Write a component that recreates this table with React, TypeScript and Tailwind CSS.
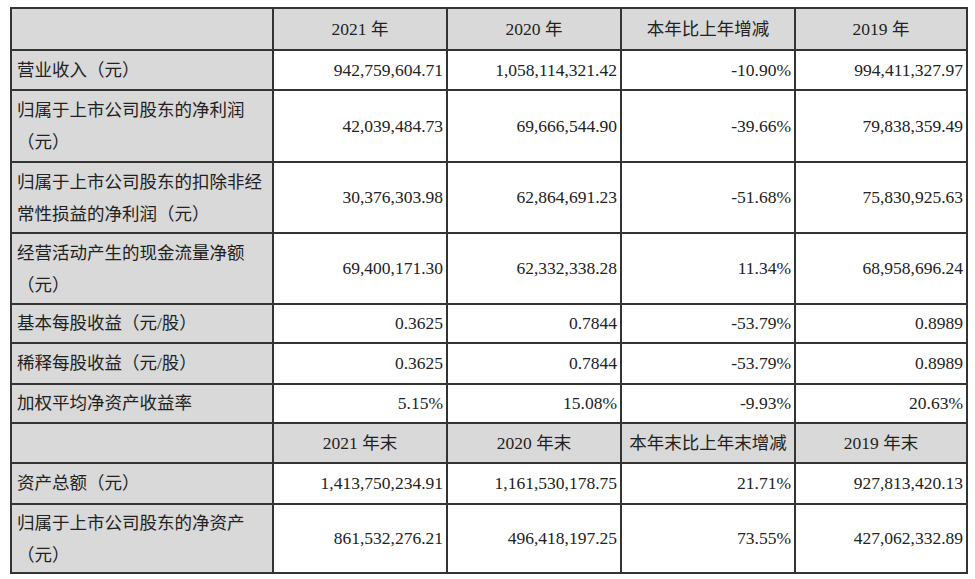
type Row = {
  label: string[];
  values: string[];
  h: string;
};

const HEAD_1 = ['2021 年', '2020 年', '本年比上年增减', '2019 年'];
const HEAD_2 = ['2021 年末', '2020 年末', '本年末比上年末增减', '2019 年末'];

const ROWS_1: Row[] = [
  { label: ['营业收入（元）'], values: ['942,759,604.71', '1,058,114,321.42', '-10.90%', '994,411,327.97'], h: 'h-[40px]' },
  { label: ['归属于上市公司股东的净利润', '（元）'], values: ['42,039,484.73', '69,666,544.90', '-39.66%', '79,838,359.49'], h: 'h-[72px]' },
  { label: ['归属于上市公司股东的扣除非经', '常性损益的净利润（元）'], values: ['30,376,303.98', '62,864,691.23', '-51.68%', '75,830,925.63'], h: 'h-[71px]' },
  { label: ['经营活动产生的现金流量净额', '（元）'], values: ['69,400,171.30', '62,332,338.28', '11.34%', '68,958,696.24'], h: 'h-[71px]' },
  { label: ['基本每股收益（元/股）'], values: ['0.3625', '0.7844', '-53.79%', '0.8989'], h: 'h-[39px]' },
  { label: ['稀释每股收益（元/股）'], values: ['0.3625', '0.7844', '-53.79%', '0.8989'], h: 'h-[41px]' },
  { label: ['加权平均净资产收益率'], values: ['5.15%', '15.08%', '-9.93%', '20.63%'], h: 'h-[39px]' },
];

const ROWS_2: Row[] = [
  { label: ['资产总额（元）'], values: ['1,413,750,234.91', '1,161,530,178.75', '21.71%', '927,813,420.13'], h: 'h-[41px]' },
  { label: ['归属于上市公司股东的净资产', '（元）'], values: ['861,532,276.21', '496,418,197.25', '73.55%', '427,062,332.89'], h: 'h-[69px]' },
];

const cell = 'border-2 border-[#333]';

function HeadRow({ cols, h }: { cols: string[]; h: string }) {
  return (
    <tr className={`${h} bg-[#d9d9d9]`}>
      <td className={cell}></td>
      {cols.map((c) => (
        <td key={c} className={`${cell} text-center`}>
          {c}
        </td>
      ))}
    </tr>
  );
}

function DataRow({ row }: { row: Row }) {
  const tall = row.label.length > 1;
  return (
    <tr className={row.h}>
      <td className={`${cell} bg-[#d9d9d9] pl-[5px] align-middle`}>
        {row.label.map((l, i) => (
          <div key={i} className={tall ? 'leading-[32px]' : ''}>
            {l}
          </div>
        ))}
      </td>
      {row.values.map((v, i) => (
        <td key={i} className={`${cell} bg-white pr-[3px] text-right`}>
          {v}
        </td>
      ))}
    </tr>
  );
}

export default function App() {
  return (
    <div className="min-h-[579px] w-[975px] bg-white pt-[7px] pl-[10px]">
      <table
        className="w-[956px] table-fixed border-collapse text-[17.5px] text-[#222]"
        style={{ fontFamily: '"Liberation Serif", "Noto Sans CJK SC", serif' }}
      >
        <colgroup>
          <col className="w-[262px]" />
          <col className="w-[174px]" />
          <col className="w-[174px]" />
          <col className="w-[174px]" />
          <col className="w-[172px]" />
        </colgroup>
        <tbody>
          <HeadRow cols={HEAD_1} h="h-[42px]" />
          {ROWS_1.map((r) => (
            <DataRow key={r.label.join('')} row={r} />
          ))}
          <HeadRow cols={HEAD_2} h="h-[40px]" />
          {ROWS_2.map((r) => (
            <DataRow key={r.label.join('')} row={r} />
          ))}
        </tbody>
      </table>
    </div>
  );
}
